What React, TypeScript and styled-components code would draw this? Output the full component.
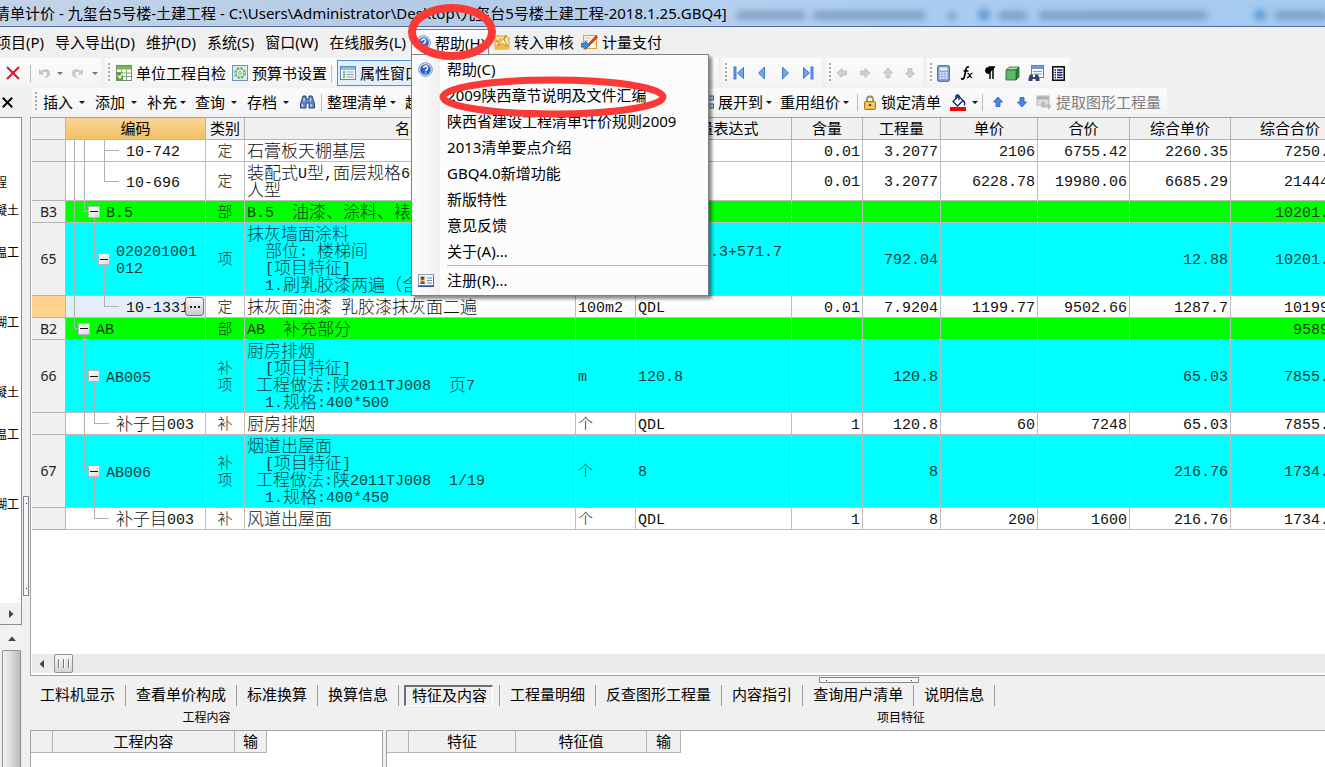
import React from "react";
import styled, { createGlobalStyle, css } from "styled-components";

const UI = '"Noto Sans", "Noto Sans CJK SC", sans-serif';
const SONG = '"Liberation Sans", "Noto Sans CJK SC", sans-serif';
const MONO = '"Liberation Mono", "Noto Sans CJK SC", monospace';
const LINE = "#b4b4b4";
const RED = "#fb3a37";

const Global = createGlobalStyle`
  *, *::before, *::after { box-sizing: border-box; }
  html, body, #root { height: 100%; }
  body { margin: 0; background: #f0f0f0; color: #000; font: 15px/20px ${UI}; overflow: hidden; }
  button { font: inherit; color: inherit; background: none; border: 0; padding: 0; margin: 0; white-space: nowrap; }
  ul { list-style: none; margin: 0; padding: 0; }
  svg { display: block; flex: none; }
`;

const Window = styled.div`
  display: flex;
  flex-direction: column;
  height: 100vh;
  overflow: hidden;
`;

/* ---------- title and menu ---------- */

const TitleBar = styled.header`
  flex: none;
  display: flex;
  align-items: center;
  height: 27px;
  overflow: hidden;
  border-bottom: 1px solid #4f6d98;
  background: linear-gradient(90deg, #c3d4e8 0, #b4cbe6 30%, #b5d0ee 54%, #a9ccf0 70%, #a5caf0 100%);
`;

const TitleText = styled.h1`
  flex: none;
  margin: 0 0 0 -5px;
  font-size: 15px;
  font-weight: 400;
  white-space: pre;
`;

const Smears = styled.svg`
  filter: blur(3px);
`;

const MenuBar = styled.nav`
  flex: none;
  display: flex;
  align-items: flex-start;
  gap: 11px;
  height: 31px;
  padding-top: 2px;
  margin-left: -4px;
`;

const MenuItem = styled.button`
  display: flex;
  align-items: center;
  gap: 4px;
  height: 26px;
`;

const MenuGroup = styled.div`
  display: flex;
  gap: 7px;
`;

const HelpMenu = styled.div`
  position: relative;
  width: 78px;
  margin: 0 -6px;
`;

const HelpTitle = styled(MenuItem)`
  width: 100%;
  height: 26px;
  padding-left: 4px;
  overflow: hidden;
  background: #fcfcfc;
  border: 1px solid #7f7f7f;
  border-bottom: 0;
`;

const Popup = styled.ul`
  position: absolute;
  z-index: 5;
  top: 25px;
  left: 0;
  width: 298px;
  padding: 1px 0 2px;
  border: 1px solid #7f7f7f;
  background: linear-gradient(90deg, #fefefe 0, #f0f0f1 28px, #fcfcfc 28px);
  box-shadow: 3px 3px 3px rgba(0, 0, 0, 0.45);
`;

const PopupRow = styled.li<{ $ruled?: boolean }>`
  ${(p) =>
    p.$ruled &&
    css`
      margin-top: 1px;
      padding-top: 2px;
      background: linear-gradient(#b4b4b4, #b4b4b4) 35px 0 / 100% 1px no-repeat;
    `}
`;

const PopupButton = styled.button`
  display: flex;
  align-items: center;
  width: 100%;
  height: 26px;
  text-align: left;
`;

const PopupIcon = styled.span`
  width: 35px;
  padding-left: 6px;
`;

const Marker = styled.svg`
  position: absolute;
  z-index: 6;
  top: -29px;
  left: -8px;
  pointer-events: none;
`;

/* ---------- toolbars ---------- */

const ToolRow = styled.div<{ $h: number }>`
  flex: none;
  display: flex;
  align-items: stretch;
  height: ${(p) => p.$h}px;
`;

const Band = styled.div<{ $w?: number; $lead?: number }>`
  flex: none;
  display: flex;
  align-items: center;
  width: ${(p) => (p.$w ? p.$w + "px" : "auto")};
  margin: 0 4px 0 ${(p) => p.$lead ?? 0}px;
  overflow: hidden;
  background: linear-gradient(#fbfbfb, #f7f7f7 60%, #f2f2f2);
`;

const Grip = styled.span<{ $tight?: boolean }>`
  flex: none;
  width: 2px;
  height: 20px;
  margin: 0 ${(p) => (p.$tight ? 0 : 6)}px 0 3px;
  background: repeating-linear-gradient(#a9a9a9 0 2px, transparent 2px 4px);
`;

const Rule = styled.span`
  flex: none;
  width: 1px;
  height: 17px;
  margin: 0 5px 0 4px;
  background: #b9bcc2;
`;

const Tool = styled.button<{ $w?: number; $pressed?: boolean; $dim?: boolean }>`
  flex: none;
  display: flex;
  align-items: center;
  gap: 4px;
  width: ${(p) => (p.$w ? p.$w + "px" : "auto")};
  height: 26px;
  color: ${(p) => (p.$dim ? "#7d7d7d" : "#000")};
  ${(p) =>
    p.$pressed &&
    css`
      padding: 0 8px 0 2px;
      border: 1px solid #4c94de;
      background: #e3eefa;
    `}
`;

const IconTool = styled.button<{ $w: number }>`
  flex: none;
  display: grid;
  place-items: center;
  align-self: center;
  width: ${(p) => p.$w}px;
  height: 24px;
`;

const Caret = styled.i<{ $dim?: boolean; $gap?: number }>`
  width: 0;
  height: 0;
  margin-left: ${(p) => p.$gap ?? -1}px;
  border: 3px solid transparent;
  border-top-color: ${(p) => (p.$dim ? "#777" : "#111")};
  border-bottom: 0;
`;

/* ---------- work area ---------- */

const Work = styled.div`
  flex: 1;
  display: flex;
  min-height: 0;
  padding-top: 1px;
`;

const Side = styled.aside`
  flex: none;
  display: flex;
  flex-direction: column;
  width: 22px;
`;

const SidePanel = styled.div`
  display: flex;
  flex-direction: column;
  height: 508px;
  border: 1px solid #8d8f93;
  border-left: 0;
  background: #fff;
`;

const SideList = styled.ul`
  flex: 1;
  padding-top: 58px;
  overflow: hidden;
  font: 12px/14px ${SONG};
  white-space: pre;
`;

const SideRow = styled.li`
  display: flex;
  justify-content: flex-end;
  height: 14px;
  padding-right: 2px;
`;

const SideScroll = styled.button`
  display: grid;
  place-items: center;
  height: 21px;
  background: #f0f0f0;
`;

const SideLower = styled.div`
  flex: 1;
  display: flex;
  flex-direction: column;
  margin: 3px 0 0 2px;
  background: #ececec;
`;

const SideUp = styled.button`
  display: grid;
  place-items: center;
  height: 22px;
  background: #f2f2f2;
`;

const SideThumb = styled.div`
  flex: 1;
  width: 19px;
  border: 1px solid #8f9194;
  border-bottom: 0;
  border-radius: 2px 2px 0 0;
  background: linear-gradient(90deg, #f2f2f2, #dcdde0 45%, #b9bbc0);
`;

const Splitter = styled.div`
  flex: none;
  display: flex;
  justify-content: center;
  width: 8px;
  padding-top: 379px;
`;

const Handle = styled.span<{ $flat?: boolean }>`
  display: flex;
  flex-direction: ${(p) => (p.$flat ? "row" : "column")};
  justify-content: space-between;
  align-items: center;
  width: ${(p) => (p.$flat ? 100 : 6)}px;
  height: ${(p) => (p.$flat ? 6 : 100)}px;
  padding: ${(p) => (p.$flat ? "0 6px" : "6px 0")};
  border: 1px solid #85878b;
  background: #f6f6f6;
  &::before,
  &::after {
    content: "";
    width: 1px;
    height: 1px;
    background: #333;
  }
`;

const Main = styled.main`
  flex: 1;
  display: flex;
  flex-direction: column;
  min-width: 0;
`;

const GridPanel = styled.section`
  flex: 1;
  display: flex;
  flex-direction: column;
  min-height: 0;
  overflow: hidden;
  padding: 0 0 2px 1px;
  border: solid #a0a2a6;
  border-width: 1px 0 1px 1px;
  background: #fff;
`;

const GridBody = styled.div`
  flex: 1;
  overflow: hidden;
`;

const Sheet = styled.table`
  width: 1318px;
  table-layout: fixed;
  border-collapse: separate;
  border-spacing: 0;
  font: 300 15px/17px ${MONO};
`;

const Head = styled.th<{ $on?: boolean }>`
  height: 22px;
  padding: 0;
  overflow: hidden;
  font: 15px/18px ${SONG};
  text-align: center;
  border: solid ${LINE};
  border-width: 0 1px 1px 0;
  background: ${(p) => (p.$on ? "linear-gradient(#fad59a, #f3bf66)" : "#f0f0f0")};
`;

const fills = { plain: "#fff", part: "#00ff00", item: "#00ffff" };
type Kind = keyof typeof fills;

const Row = styled.tr<{ $kind: Kind; $h: number }>`
  height: ${(p) => p.$h}px;
  background: ${(p) => fills[p.$kind]};
  color: ${(p) => (p.$kind === "plain" ? "#111" : p.$kind === "part" ? "#033c03" : "#033f3f")};
`;

const Cell = styled.td<{ $align?: string }>`
  padding: 3px 2px 0;
  overflow: hidden;
  text-align: ${(p) => p.$align ?? "left"};
  vertical-align: middle;
  white-space: pre;
  border: solid #bdbdbd;
  border-width: 0 1px 1px 0;
`;

const RowHead = styled.th<{ $on?: boolean }>`
  padding: 0;
  font: 14px/18px ${UI};
  color: #222;
  text-align: center;
  border: solid ${LINE};
  border-width: 0 1px 1px 0;
  background: ${(p) => (p.$on ? "#ffd28e" : "#f0f0f0")};
`;

const CodeCell = styled(Cell)<{ $on?: boolean }>`
  padding: 0 0 0 3px;
  ${(p) => p.$on && "background: #e3eefa;"}
`;

const Code = styled.div<{ $h: number }>`
  position: relative;
  display: flex;
  align-items: center;
  height: ${(p) => p.$h}px;
`;

const CodeText = styled.span`
  margin-left: 7px;
  padding-top: 4px;
`;

const VERT = { full: "5px 0 / 1px 100%", top: "5px 0 / 1px 50%", foot: "5px 100% / 1px 50%", none: "0 0 / 0 0" };

const Guide = styled.span<{ $v: keyof typeof VERT; $h?: "half" | "whole" }>`
  flex: none;
  display: grid;
  place-content: center;
  align-self: stretch;
  width: 10px;
  background: linear-gradient(#a9b4b4, #a9b4b4) ${(p) => VERT[p.$v]} no-repeat,
    linear-gradient(#a9b4b4, #a9b4b4) right center /
      ${(p) => (p.$h === "half" ? 5 : p.$h === "whole" ? 10 : 0)}px 1px no-repeat;
`;

const Fold = styled.button`
  display: grid;
  place-items: center;
  width: 12px;
  height: 12px;
  border: 1px solid #b3b7ba;
  background: linear-gradient(135deg, #fff, #d9dcde);
  &::before {
    content: "";
    width: 8px;
    height: 1px;
    background: #111;
  }
`;

const More = styled.button`
  position: absolute;
  right: 1px;
  top: 1px;
  display: flex;
  align-items: center;
  justify-content: center;
  gap: 2px;
  width: 19px;
  height: 19px;
  border: 1px solid #70757c;
  border-radius: 3px;
  background: linear-gradient(#fafafa, #c9cbce);
`;

const Dot = styled.i`
  width: 2px;
  height: 2px;
  background: #222;
`;

const Ideographs = styled.span`
  font-size: 17px;
  line-height: 0;
  vertical-align: -1px;
`;

const HScroll = styled.div`
  flex: none;
  display: flex;
  align-items: center;
  gap: 8px;
  height: 19px;
  padding-left: 6px;
  background: #ebebeb;
`;

const HThumb = styled.button`
  display: flex;
  align-items: center;
  justify-content: center;
  gap: 3px;
  width: 19px;
  height: 19px;
  border: 1px solid #8e9196;
  border-radius: 2px;
  background: linear-gradient(#f7f7f7, #d2d4d7);
`;

const Ridge = styled.i`
  width: 2px;
  height: 9px;
  background: linear-gradient(90deg, #777 50%, #fff 50%);
`;

/* ---------- lower pane ---------- */

const Lower = styled.section`
  flex: none;
  display: flex;
  flex-direction: column;
  height: 91px;
`;

const TabStrip = styled.div`
  position: relative;
  flex: none;
  display: flex;
  align-items: center;
  height: 32px;
  padding-top: 6px;
  font: 15px/20px ${SONG};
`;

const Tab = styled.button<{ $on?: boolean }>`
  display: flex;
  align-items: center;
  height: 21px;
  padding: ${(p) => (p.$on ? "0 6px 0 5px" : "0 10px")};
  border-right: 1px solid #9b9b9b;
`;

const TabFace = styled.span<{ $on?: boolean }>`
  ${(p) =>
    p.$on &&
    css`
      height: 21px;
      padding: 0 5px 0 6px;
      border: solid;
      border-width: 2px 1px 1px 2px;
      border-color: #6f6f6f #fff #fff #6f6f6f;
      line-height: 18px;
    `}
`;

const TopHandle = styled.div`
  position: absolute;
  top: 1px;
  left: 789px;
`;

const Panes = styled.div`
  flex: 1;
  display: flex;
  gap: 3px;
  overflow: hidden;
`;

const Pane = styled.div<{ $w: number }>`
  flex: none;
  display: flex;
  flex-direction: column;
  width: ${(p) => p.$w}px;
`;

const PaneTitle = styled.h2`
  margin: 0;
  height: 22px;
  font: 12px/20px ${SONG};
  text-align: center;
`;

const PaneBody = styled.div`
  flex: 1;
  border: 1px solid #a0a2a6;
  border-bottom: 0;
  background: #fff;
`;

const PaneTable = styled.table`
  table-layout: fixed;
  border-collapse: separate;
  border-spacing: 0;
`;

/* ---------- icons ---------- */

const QuestionIcon = () => (
  <svg width="15" height="15" viewBox="0 0 15 15">
    <circle cx="7.5" cy="7.5" r="6.8" fill="#dbe6f8" stroke="#7d93c4" />
    <circle cx="7.5" cy="7.5" r="5.3" fill="#2f62c8" />
    <path d="M5.6 6a2 2 0 1 1 3 1.7c-.8.5-1 .8-1 1.5M7.6 10.4v1.2" fill="none" stroke="#fff" strokeWidth="1.5" />
  </svg>
);

const CardIcon = () => (
  <svg width="16" height="13" viewBox="0 0 16 13">
    <rect x=".5" y=".5" width="15" height="11" fill="#f2f6fd" stroke="#8a9dc0" />
    <path d="M0 12.3h16V2" fill="none" stroke="#2f4f8f" strokeWidth="1.2" />
    <rect x="2" y="2" width="5" height="8" fill="#d8c79a" />
    <circle cx="4.5" cy="4.3" r="1.7" fill="#6a3d1c" />
    <path d="M2.3 10c0-4 4.6-4 4.6 0z" fill="#a8452c" />
    <path d="M9 4h5M9 6.5h5M9 9h5" stroke="#6d86bd" />
  </svg>
);

const TransferIcon = () => (
  <svg width="16" height="16" viewBox="0 0 16 16">
    <path d="M1 2h12l2 2v11H1z" fill="#fbe3a1" stroke="#cf9a2f" />
    <path d="M1 11h14v4H1z" fill="#eebb45" />
    <path d="M12.5 1 10 5.5l3.5 7L9 9.6l-5.5 1.6 3.6-3.6z" fill="#fdf3cf" stroke="#c8841c" />
    <path d="m2 6 2 2.5L7 4" fill="none" stroke="#d98d20" strokeWidth="1.3" />
  </svg>
);

const PayIcon = () => (
  <svg width="17" height="16" viewBox="0 0 17 16">
    <rect x="2.5" y="1.5" width="13" height="13" fill="#fff4d6" stroke="#dfa13a" />
    <path d="M4 4h5M4 6.500h3" stroke="#c9c2b0" />
    <path d="m15 1.500-6.500 7-1.500 3 3-1.500L16.500 3.500z" fill="#d64c30" stroke="#8c2b1b" strokeWidth=".7" />
    <path d="M0 9.500h4V7l5 4.300-5 4.200v-2.500H0z" fill="#3a8fe0" stroke="#165aa4" strokeWidth=".8" />
  </svg>
);

const Cross = ({ color, size, w }: { color: string; size: number; w: number }) => (
  <svg width={size} height={size} viewBox="0 0 14 14">
    <path d="M1 1l12 12M13 1 1 13" stroke={color} strokeWidth={w} />
  </svg>
);

const UndoIcon = ({ flip }: { flip?: boolean }) => (
  <svg width="13" height="13" viewBox="0 0 13 13">
    <g transform={flip ? "matrix(-1 0 0 1 13 0)" : undefined}>
      <path d="M1 2v5.500h5.500L4.600 5.600C7 3.800 9 4.800 9 6.800c0 1.700-1.200 3-3 4.200 4.500-.3 6-2.500 6-4.700C12 2.300 7.500.6 3 4z" fill="#c4c6ca" />
    </g>
  </svg>
);

const CheckSheetIcon = () => (
  <svg width="16" height="16" viewBox="0 0 16 16">
    <rect x=".5" y=".5" width="15" height="15" fill="#fff" stroke="#6e8f6e" />
    <rect x="1" y="1" width="14" height="3.500" fill="#78b84b" />
    <path d="M1 8h14M1 11.500h14M5.500 4.500V15M10.500 4.500V15" stroke="#88a488" />
    <rect x="1" y="7" width="6" height="8" fill="#5aa63a" />
    <path d="m2 10.500 2 2.500L6.500 8" fill="none" stroke="#fff" strokeWidth="1.300" />
  </svg>
);

const GearSheetIcon = () => (
  <svg width="16" height="16" viewBox="0 0 16 16">
    <rect x=".5" y=".5" width="15" height="15" fill="#dcebf8" stroke="#6f93b8" />
    <circle cx="8" cy="8" r="5" fill="none" stroke="#79b476" strokeWidth="2" strokeDasharray="2.400 1.500" />
    <circle cx="8" cy="8" r="4" fill="#f0f8e8" stroke="#79b476" />
    <circle cx="8" cy="8" r="1.500" fill="none" stroke="#79b476" />
  </svg>
);

const PropsIcon = () => (
  <svg width="16" height="14" viewBox="0 0 16 14">
    <rect x=".5" y=".5" width="15" height="13" fill="#fff" stroke="#5c86b5" />
    <rect x="1" y="1" width="14" height="3" fill="#7fc0e4" />
    <path d="M3 6h2M3 8.500h2M3 11h2" stroke="#2f9a52" strokeWidth="1.300" />
    <path d="M6.500 6H14M6.500 8.500H14M6.500 11H14" stroke="#7f95ad" />
  </svg>
);

const BinocularsIcon = () => (
  <svg width="15" height="14" viewBox="0 0 15 14">
    <path d="M3 1h3v3h3V1h3l2.500 8v4H9V8H6v5H.5V9z" fill="#5e8ac6" stroke="#21457f" />
    <path d="M2.500 9v3M11 9v3M4 3v3M10.500 3v3" stroke="#cfe0f7" strokeWidth="1.200" />
  </svg>
);

const NavIcon = ({ end, flip }: { end?: boolean; flip?: boolean }) => (
  <svg width="12" height="14" viewBox="0 0 12 14">
    <g transform={flip ? "matrix(-1 0 0 1 12 0)" : undefined} fill="#6fa4ec" stroke="#3d6fc6" strokeWidth=".9">
      {end && <rect x="1" y="1" width="2" height="12" />}
      <path d={end ? "M10.500 1.500v11L4.500 7z" : "M8.500 1v12L2.500 7z"} />
    </g>
  </svg>
);

const ArrowIcon = ({ turn, blue }: { turn: number; blue?: boolean }) => (
  <svg width="12" height="12" viewBox="0 0 12 12">
    <path
      transform={`rotate(${turn} 6 6)`}
      d="M6 1 10.500 6H8v4.500H4V6H1.500z"
      fill={blue ? "#4a86e8" : "#d0d0d0"}
      stroke={blue ? "#2558b8" : "#b9b9b9"}
      strokeWidth=".8"
    />
  </svg>
);

const CalcIcon = () => (
  <svg width="13" height="17" viewBox="0 0 13 17">
    <rect x=".7" y=".7" width="11.600" height="15.600" rx="1" fill="#86a8d8" stroke="#395f9b" />
    <rect x="2.500" y="2.500" width="8" height="3" fill="#e5f0ff" />
    <path d="M2.500 8h8M2.500 10.500h8M2.500 13h8" stroke="#f4f8ff" strokeWidth="1.500" strokeDasharray="2 1" />
  </svg>
);

const FxIcon = () => (
  <svg width="14" height="14" viewBox="0 0 14 14" fill="none" stroke="#000">
    <path d="M9 1.200C7 .4 6.300 1.800 5.800 4L4.300 11c-.4 2-1.600 2.500-3.200 1.600M3.500 5h5" strokeWidth="1.700" />
    <path d="M7.500 7.500c2-.8 2 4.500 4.500 4M12.500 7c-2 0-3 5-5.500 4.700" strokeWidth="1.200" />
  </svg>
);

const PilcrowIcon = () => (
  <svg width="12" height="14" viewBox="0 0 12 14">
    <path d="M11 1H5C-.3 1-.3 8 5 8z" fill="#000" />
    <path d="M6 1v12M9 1v12M4.500 1H11" stroke="#000" strokeWidth="1.500" />
  </svg>
);

const CubeIcon = () => (
  <svg width="15" height="15" viewBox="0 0 15 15" strokeWidth=".8" stroke="#1d6a2d">
    <path d="M1 4 4.500 1H14l-3 3z" fill="#a9e0aa" />
    <path d="M11 4l3-3v10l-3 3z" fill="#2d7f3c" />
    <path d="M1 4h10v10H1z" fill="#62b96b" />
  </svg>
);

const FindSheetIcon = () => (
  <svg width="16" height="17" viewBox="0 0 16 17">
    <rect x="3.500" y=".5" width="12" height="12" fill="#fff" stroke="#5e83bd" />
    <path d="M4 2.500h11" stroke="#6f9ae0" strokeWidth="3" />
    <path d="M5 6.500h9M5 9h9" stroke="#7b97c2" />
    <path d="M2 9.500h3V12h2V9.500h3l1.500 4V16H7.500v-2h-3v2H.5v-2.500z" fill="#31456b" />
  </svg>
);

const ListIcon = () => (
  <svg width="13" height="15" viewBox="0 0 13 15">
    <rect x=".8" y=".8" width="11.400" height="13.400" fill="#fff" stroke="#000" strokeWidth="1.500" />
    <path d="M2.500 4h1.500M2.500 6.500h1.500M2.500 9h1.500M2.500 11.500h1.500M5 4h5.500M5 6.500h5.500M5 9h5.500M5 11.500h5.500" stroke="#101a6e" strokeWidth="1.300" />
  </svg>
);

const TreeSheetIcon = () => (
  <svg width="12" height="15" viewBox="0 0 12 15">
    <rect x="1.500" y="1" width="10" height="4" fill="#bcd3f2" stroke="#3c68ad" />
    <rect x="4.500" y="9" width="7" height="4" fill="#bcd3f2" stroke="#3c68ad" />
    <path d="M2.500 5v6h2" fill="none" stroke="#3c68ad" />
  </svg>
);

const LockIcon = () => (
  <svg width="14" height="15" viewBox="0 0 14 15">
    <path d="M4 7V4.500a3 3 0 0 1 6 0V7" fill="none" stroke="#9a8a63" strokeWidth="1.800" />
    <rect x="1.500" y="6.500" width="11" height="8" rx="1" fill="#f1bd42" stroke="#a8741a" />
    <path d="M2.500 9h9M2.500 12h9" stroke="#fbe19a" />
    <circle cx="7" cy="10" r="1.300" fill="#6d4a10" />
  </svg>
);

const BucketIcon = () => (
  <svg width="16" height="17" viewBox="0 0 16 17">
    <path d="M3 7.500 8.500 2 13 6.500l-5.500 5.500z" fill="#fff" stroke="#14226f" strokeWidth="1.300" />
    <path d="M6 5V2.500c0-2 3-2 3 0V6M13 6.500c2 1 2 3 1.300 5" fill="none" stroke="#14226f" strokeWidth="1.400" />
    <rect x="0" y="13" width="16" height="4" fill="#f00" />
  </svg>
);

const ExtractIcon = () => (
  <svg width="16" height="15" viewBox="0 0 16 15">
    <rect x="1" y="1" width="12" height="9" fill="#dedede" stroke="#b5b5b5" />
    <path d="M1 3h12" stroke="#b0b0b0" strokeWidth="3" />
    <path d="M5 7h4v3h3V7.500l3.500 4L12 15v-2.500H5z" fill="#bdbdbd" />
  </svg>
);

const Triangle = ({ turn }: { turn: number }) => (
  <svg width="8" height="8" viewBox="0 0 8 8">
    <path transform={`rotate(${turn} 4 4)`} d="M2 0v8l4.500-4z" fill="#444" />
  </svg>
);

/* ---------- data ---------- */

type Tree = string; // "|" through, "L"/"T" elbow, "+" fold box, "-" dash, " " gap

interface Line {
  head: string;
  tree: Tree;
  code: string;
  type: string;
  name: string;
  unit?: string;
  expr?: string;
  nums: string[];
  kind: Kind;
  h: number;
  active?: boolean;
}

const COLUMNS: [string, number][] = [
  ["", 34],
  ["编码", 140],
  ["类别", 39],
  ["名称", 331],
  ["单位", 60],
  ["工程量表达式", 156],
  ["含量", 71],
  ["工程量", 78],
  ["单价", 97],
  ["合价", 92],
  ["综合单价", 101],
  ["综合合价", 119],
];

const LINES: Line[] = [
  { head: "", tree: "|| T-", code: "10-742", type: "定", name: "石膏板天棚基层", unit: "100m2", expr: "", nums: ["0.01", "3.2077", "2106", "6755.42", "2260.35", "7250.52"], kind: "plain", h: 22 },
  { head: "", tree: "|| L-", code: "10-696", type: "定", name: "装配式U型,面层规格600*600\n人型", unit: "100m2", expr: "", nums: ["0.01", "3.2077", "6228.78", "19980.06", "6685.29", "21444.4"], kind: "plain", h: 39 },
  { head: "B3", tree: "|L+", code: "B.5", type: "部", name: "B.5  油漆、涂料、裱糊工程", nums: ["", "", "", "", "", "10201.48"], kind: "part", h: 22 },
  { head: "65", tree: "| L+", code: "020201001\n012", type: "项", name: "抹灰墙面涂料\n  部位: 楼梯间\n  [项目特征]\n  1.刷乳胶漆两遍（含腻子）", unit: "m2", expr: "219.04+1.3+571.7\n+0", nums: ["", "792.04", "", "", "12.88", "10201.48"], kind: "item", h: 73 },
  { head: "", tree: "|  L-", code: "10-1331", type: "定", name: "抹灰面油漆 乳胶漆抹灰面二遍", unit: "100m2", expr: "QDL", nums: ["0.01", "7.9204", "1199.77", "9502.66", "1287.7", "10199.1"], kind: "plain", h: 22, active: true },
  { head: "B2", tree: "L+", code: "AB", type: "部", name: "AB  补充部分", nums: ["", "", "", "", "", "9589.7"], kind: "part", h: 22 },
  { head: "66", tree: " T+", code: "AB005", type: "补\n项", name: "厨房排烟\n  [项目特征]\n 工程做法:陕2011TJ008  页7\n  1.规格:400*500", unit: "m", expr: "120.8", nums: ["", "120.8", "", "", "65.03", "7855.62"], kind: "item", h: 73 },
  { head: "", tree: " |L-", code: "补子目003", type: "补", name: "厨房排烟", unit: "个", expr: "QDL", nums: ["1", "120.8", "60", "7248", "65.03", "7855.62"], kind: "plain", h: 22 },
  { head: "67", tree: " L+", code: "AB006", type: "补\n项", name: "烟道出屋面\n  [项目特征]\n 工程做法:陕2011TJ008  1/19\n  1.规格:400*450", unit: "个", expr: "8", nums: ["", "8", "", "", "216.76", "1734.08"], kind: "item", h: 73 },
  { head: "", tree: "  L-", code: "补子目003", type: "补", name: "风道出屋面", unit: "个", expr: "QDL", nums: ["1", "8", "200", "1600", "216.76", "1734.08"], kind: "plain", h: 22 },
];

const SIDE: Record<number, string> = { 0: "程　", 2: "凝土", 5: "温工", 10: "糊工", 15: "凝土", 18: "温工", 23: "糊工" };

const TABS = ["工料机显示", "查看单价构成", "标准换算", "换算信息", "特征及内容", "工程量明细", "反查图形工程量", "内容指引", "查询用户清单", "说明信息"];

const HELP = ["帮助(C)", "2009陕西章节说明及文件汇编", "陕西省建设工程清单计价规则2009", "2013清单要点介绍", "GBQ4.0新增功能", "新版特性", "意见反馈", "关于(A)...", "注册(R)..."];

/* Ideographs are set a step larger than the half-width Latin beside them. */
const Mixed = ({ text }: { text: string }) => (
  <>
    {text.split(/([\u3000-\u9fff\uff00-\uffef]+)/).map((run, i) => (i % 2 ? <Ideographs key={i}>{run}</Ideographs> : run))}
  </>
);

const TreeGuides = ({ tree }: { tree: Tree }) => (
  <>
    {tree.split("").map((c, i) => {
      if (c === "|") return <Guide key={i} $v="full" />;
      if (c === "T") return <Guide key={i} $v="full" $h="half" />;
      if (c === "L") return <Guide key={i} $v="top" $h="half" />;
      if (c === "-") return <Guide key={i} $v="none" $h="whole" />;
      if (c === "+")
        return (
          <Guide key={i} $v="foot">
            <Fold aria-label="折叠" />
          </Guide>
        );
      return <Guide key={i} $v="none" />;
    })}
  </>
);

const BottomTable = ({ cols }: { cols: [string, number][] }) => (
  <PaneTable style={{ width: cols.reduce((s, c) => s + c[1], 0) }}>
    <colgroup>
      {cols.map((c, i) => (
        <col key={i} style={{ width: c[1] }} />
      ))}
    </colgroup>
    <thead>
      <tr>
        {cols.map((c, i) => (
          <Head key={i}>{c[0]}</Head>
        ))}
      </tr>
    </thead>
  </PaneTable>
);

export default function App() {
  return (
    <Window>
      <Global />
      <TitleBar>
        <TitleText>{"清单计价 - 九玺台5号楼-土建工程 - C:\\Users\\Administrator\\Desktop\\九玺台5号楼土建工程-2018.1.25.GBQ4]"}</TitleText>
        <Smears width="600" height="26" viewBox="0 0 600 26">
          <g fill="#5c7ea6" opacity=".55">
            <rect x="10" y="11" width="68" height="9" />
            <rect x="86" y="11" width="112" height="9" />
            <rect x="221" y="12" width="8" height="8" />
            <rect x="272" y="11" width="28" height="9" />
            <rect x="312" y="11" width="168" height="9" />
            <rect x="548" y="11" width="52" height="9" />
          </g>
          <circle cx="257" cy="15" r="6" fill="#5f9bd4" />
          <circle cx="533" cy="15" r="6" fill="#5f9bd4" />
        </Smears>
      </TitleBar>

      <MenuBar>
        <MenuItem>项目(P)</MenuItem>
        <MenuItem>导入导出(D)</MenuItem>
        <MenuItem>维护(D)</MenuItem>
        <MenuItem>系统(S)</MenuItem>
        <MenuItem>窗口(W)</MenuItem>
        <MenuItem>在线服务(L)</MenuItem>
        <HelpMenu>
          <HelpTitle>
            <QuestionIcon />
            帮助(H)
          </HelpTitle>
          <Popup>
            {HELP.map((t, i) => (
              <PopupRow key={t} $ruled={i === 8}>
                <PopupButton>
                  <PopupIcon>
                    {i === 0 && <QuestionIcon />}
                    {i === 8 && <CardIcon />}
                  </PopupIcon>
                  {t}
                </PopupButton>
              </PopupRow>
            ))}
          </Popup>
          <Marker width="280" height="124" viewBox="0 0 280 124" fill="none" stroke={RED}>
            <ellipse cx="49" cy="32" rx="40" ry="24" strokeWidth="8" />
            <ellipse cx="150" cy="97" rx="110" ry="17" strokeWidth="7" />
          </Marker>
        </HelpMenu>
        <MenuGroup>
          <MenuItem>
            <TransferIcon />
            转入审核
          </MenuItem>
          <MenuItem>
            <PayIcon />
            计量支付
          </MenuItem>
        </MenuGroup>
      </MenuBar>

      <ToolRow $h={30}>
        <Band $w={101}>
          <IconTool $w={26} aria-label="删除">
            <Cross color="#d0182c" size={14} w={2} />
          </IconTool>
          <Rule />
          <IconTool $w={16} aria-label="撤销">
            <UndoIcon />
          </IconTool>
          <Caret $dim $gap={5} />
          <IconTool $w={28} aria-label="重做">
            <UndoIcon flip />
          </IconTool>
          <Caret $dim $gap={1} />
        </Band>
        <Band $w={613}>
          <Grip />
          <Tool $w={116}>
            <CheckSheetIcon />
            单位工程自检
          </Tool>
          <Tool>
            <GearSheetIcon />
            预算书设置
          </Tool>
          <Rule />
          <Tool $pressed>
            <PropsIcon />
            属性窗口
          </Tool>
        </Band>
        <Band $w={100}>
          <Grip $tight />
          <IconTool $w={23} aria-label="首条"><NavIcon end /></IconTool>
          <IconTool $w={23} aria-label="上一条"><NavIcon /></IconTool>
          <IconTool $w={23} aria-label="下一条"><NavIcon flip /></IconTool>
          <IconTool $w={23} aria-label="末条"><NavIcon end flip /></IconTool>
        </Band>
        <Band $w={97}>
          <Grip $tight />
          <IconTool $w={22} aria-label="左移"><ArrowIcon turn={-90} /></IconTool>
          <IconTool $w={23} aria-label="右移"><ArrowIcon turn={90} /></IconTool>
          <IconTool $w={23} aria-label="上移"><ArrowIcon turn={0} /></IconTool>
          <IconTool $w={22} aria-label="下移"><ArrowIcon turn={180} /></IconTool>
        </Band>
        <Band>
          <Grip $tight />
          <IconTool $w={23} aria-label="计算器"><CalcIcon /></IconTool>
          <IconTool $w={23} aria-label="函数"><FxIcon /></IconTool>
          <IconTool $w={23} aria-label="段落"><PilcrowIcon /></IconTool>
          <IconTool $w={23} aria-label="图元"><CubeIcon /></IconTool>
          <IconTool $w={23} aria-label="查找"><FindSheetIcon /></IconTool>
          <IconTool $w={23} aria-label="列表"><ListIcon /></IconTool>
        </Band>
      </ToolRow>

      <ToolRow $h={28}>
        <IconTool $w={14} aria-label="关闭">
          <Cross color="#000" size={11} w={2.4} />
        </IconTool>
        <Band $w={666} $lead={18}>
          <Grip />
          <Tool $w={52}>插入<Caret $gap={2} /></Tool>
          <Tool $w={52}>添加<Caret $gap={2} /></Tool>
          <Tool $w={48}>补充<Caret /></Tool>
          <Tool $w={52}>查询<Caret $gap={2} /></Tool>
          <Tool $w={50}>存档<Caret $gap={2} /></Tool>
          <IconTool $w={20} aria-label="查找"><BinocularsIcon /></IconTool>
          <Rule />
          <Tool $w={78}>整理清单<Caret /></Tool>
          <Tool>超高降效</Tool>
        </Band>
        <Band>
          <Tool $w={78}><TreeSheetIcon />展开到<Caret /></Tool>
          <Tool $w={73}>重用组价<Caret /></Tool>
          <Rule />
          <Tool $w={80}><LockIcon />锁定清单</Tool>
          <IconTool $w={30} aria-label="填充颜色"><BucketIcon /></IconTool>
          <Caret />
          <Rule />
          <IconTool $w={20} aria-label="上移"><ArrowIcon turn={0} blue /></IconTool>
          <IconTool $w={28} aria-label="下移"><ArrowIcon turn={180} blue /></IconTool>
          <Tool $dim $w={131}><ExtractIcon />提取图形工程量</Tool>
        </Band>
      </ToolRow>

      <Work>
        <Side>
          <SidePanel>
            <SideList>
              {Array.from({ length: 24 }, (_, i) => (
                <SideRow key={i}>{SIDE[i] ?? ""}</SideRow>
              ))}
            </SideList>
            <SideScroll aria-label="向右"><Triangle turn={0} /></SideScroll>
          </SidePanel>
          <SideLower>
            <SideUp aria-label="向上"><Triangle turn={-90} /></SideUp>
            <SideThumb />
          </SideLower>
        </Side>
        <Splitter>
          <Handle />
        </Splitter>
        <Main>
          <GridPanel>
            <GridBody>
              <Sheet>
                <colgroup>
                  {COLUMNS.map(([n, w]) => (
                    <col key={n} style={{ width: w }} />
                  ))}
                </colgroup>
                <thead>
                  <tr>
                    {COLUMNS.map(([n]) => (
                      <Head key={n} $on={n === "编码"}>{n}</Head>
                    ))}
                  </tr>
                </thead>
                <tbody>
                  {LINES.map((l, i) => (
                    <Row key={i} $kind={l.kind} $h={l.h}>
                      <RowHead $on={l.active}>{l.head}</RowHead>
                      <CodeCell $on={l.active}>
                        <Code $h={l.h - 1}>
                          <TreeGuides tree={l.tree} />
                          <CodeText><Mixed text={l.code} /></CodeText>
                          {l.active && (
                            <More aria-label="更多">
                              <Dot />
                              <Dot />
                              <Dot />
                            </More>
                          )}
                        </Code>
                      </CodeCell>
                      <Cell $align="center">{l.type}</Cell>
                      <Cell><Mixed text={l.name} /></Cell>
                      <Cell>{l.unit}</Cell>
                      <Cell>{l.expr}</Cell>
                      {l.nums.map((n, j) => (
                        <Cell key={j} $align="right">{n}</Cell>
                      ))}
                    </Row>
                  ))}
                </tbody>
              </Sheet>
            </GridBody>
            <HScroll>
              <Triangle turn={180} />
              <HThumb aria-label="水平滚动">
                <Ridge />
                <Ridge />
                <Ridge />
              </HThumb>
            </HScroll>
          </GridPanel>

          <Lower>
            <TabStrip>
              {TABS.map((t) => {
                const on = t === "特征及内容";
                return (
                  <Tab key={t} $on={on}>
                    <TabFace $on={on}>{t}</TabFace>
                  </Tab>
                );
              })}
              <TopHandle>
                <Handle $flat />
              </TopHandle>
            </TabStrip>
            <Panes>
              <Pane $w={353}>
                <PaneTitle>工程内容</PaneTitle>
                <PaneBody>
                  <BottomTable cols={[["", 22], ["工程内容", 182], ["输", 32]]} />
                </PaneBody>
              </Pane>
              <Pane $w={1030}>
                <PaneTitle>项目特征</PaneTitle>
                <PaneBody>
                  <BottomTable cols={[["", 22], ["特征", 107], ["特征值", 131], ["输", 34]]} />
                </PaneBody>
              </Pane>
            </Panes>
          </Lower>
        </Main>
      </Work>
    </Window>
  );
}
